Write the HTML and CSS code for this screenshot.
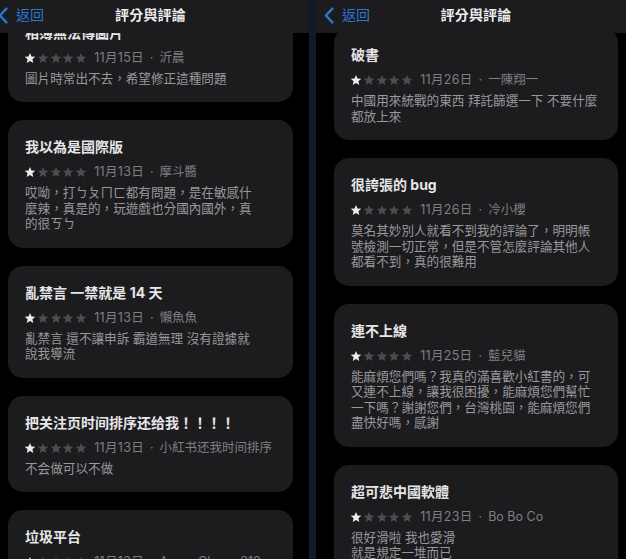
FILE: index.html
```html
<!DOCTYPE html>
<html lang="zh-Hant">
<head>
<meta charset="utf-8">
<title>評分與評論</title>
<link rel="stylesheet" href="styles.css">
</head>
<body>
<svg class="defs" width="0" height="0" aria-hidden="true">
  <symbol id="star" viewBox="0 0 24 24"><path d="M12 1.8l3 7.1 7.6.6-5.8 5 1.8 7.5L12 18l-6.6 4 1.8-7.5-5.8-5 7.6-.6z"/></symbol>
  <symbol id="chev" viewBox="0 0 10 17"><path d="M8.4 1.6 1.9 8.5l6.5 6.9" fill="none" stroke="currentColor" stroke-width="2.4" stroke-linecap="round" stroke-linejoin="round"/></symbol>
</svg>
<div class="screens">
  <section class="panel panel-left">
    <header class="nav">
      <div class="back"><svg class="chev"><use href="#chev"/></svg><span>返回</span></div>
      <div class="nav-title">評分與評論</div>
      <div></div>
    </header>
    <div class="list">
      <article class="card first-left">
        <h3 class="title">相簿無法傳圖片</h3>
        <div class="meta"><span class="stars"><svg class="star on"><use href="#star"/></svg><svg class="star"><use href="#star"/></svg><svg class="star"><use href="#star"/></svg><svg class="star"><use href="#star"/></svg><svg class="star"><use href="#star"/></svg></span><span class="date">11月15日</span><span class="dot">·</span><span>沂晨</span></div>
        <p class="body">圖片時常出不去，希望修正這種問題</p>
      </article>
      <article class="card">
        <h3 class="title">我以為是國際版</h3>
        <div class="meta"><span class="stars"><svg class="star on"><use href="#star"/></svg><svg class="star"><use href="#star"/></svg><svg class="star"><use href="#star"/></svg><svg class="star"><use href="#star"/></svg><svg class="star"><use href="#star"/></svg></span><span class="date">11月13日</span><span class="dot">·</span><span>摩斗醬</span></div>
        <p class="body">哎呦，打ㄅㄆㄇㄈ都有問題，是在敏感什<br>麼辣，真是的，玩遊戲也分國內國外，真<br>的很ㄎㄅ</p>
      </article>
      <article class="card">
        <h3 class="title">亂禁言 一禁就是 14 天</h3>
        <div class="meta"><span class="stars"><svg class="star on"><use href="#star"/></svg><svg class="star"><use href="#star"/></svg><svg class="star"><use href="#star"/></svg><svg class="star"><use href="#star"/></svg><svg class="star"><use href="#star"/></svg></span><span class="date">11月13日</span><span class="dot">·</span><span>懶魚魚</span></div>
        <p class="body">亂禁言 還不讓申訴 霸道無理 沒有證據就<br>說我導流</p>
      </article>
      <article class="card">
        <h3 class="title">把关注页时间排序还给我！！！！</h3>
        <div class="meta"><span class="stars"><svg class="star on"><use href="#star"/></svg><svg class="star"><use href="#star"/></svg><svg class="star"><use href="#star"/></svg><svg class="star"><use href="#star"/></svg><svg class="star"><use href="#star"/></svg></span><span class="date">11月13日</span><span class="dot">·</span><span>小紅书还我时间排序</span></div>
        <p class="body">不会做可以不做</p>
      </article>
      <article class="card">
        <h3 class="title">垃圾平台</h3>
        <div class="meta"><span class="stars"><svg class="star on"><use href="#star"/></svg><svg class="star"><use href="#star"/></svg><svg class="star"><use href="#star"/></svg><svg class="star"><use href="#star"/></svg><svg class="star"><use href="#star"/></svg></span><span class="date">11月13日</span><span class="dot">·</span><span>Aaron Chang 310</span></div>
      </article>
    </div>
  </section>
  <div class="divider"></div>
  <section class="panel panel-right">
    <header class="nav">
      <div class="back"><svg class="chev"><use href="#chev"/></svg><span>返回</span></div>
      <div class="nav-title">評分與評論</div>
      <div></div>
    </header>
    <div class="list">
      <article class="card first-right">
        <h3 class="title">破書</h3>
        <div class="meta"><span class="stars"><svg class="star on"><use href="#star"/></svg><svg class="star"><use href="#star"/></svg><svg class="star"><use href="#star"/></svg><svg class="star"><use href="#star"/></svg><svg class="star"><use href="#star"/></svg></span><span class="date">11月26日</span><span class="dot">·</span><span>一陳翔一</span></div>
        <p class="body">中國用來統戰的東西 拜託篩選一下 不要什麼<br>都放上來</p>
      </article>
      <article class="card">
        <h3 class="title">很誇張的 bug</h3>
        <div class="meta"><span class="stars"><svg class="star on"><use href="#star"/></svg><svg class="star"><use href="#star"/></svg><svg class="star"><use href="#star"/></svg><svg class="star"><use href="#star"/></svg><svg class="star"><use href="#star"/></svg></span><span class="date">11月26日</span><span class="dot">·</span><span>冷小櫻</span></div>
        <p class="body">莫名其妙別人就看不到我的評論了，明明帳<br>號檢測一切正常，但是不管怎麼評論其他人<br>都看不到，真的很難用</p>
      </article>
      <article class="card">
        <h3 class="title">連不上線</h3>
        <div class="meta"><span class="stars"><svg class="star on"><use href="#star"/></svg><svg class="star"><use href="#star"/></svg><svg class="star"><use href="#star"/></svg><svg class="star"><use href="#star"/></svg><svg class="star"><use href="#star"/></svg></span><span class="date">11月25日</span><span class="dot">·</span><span>藍兒貓</span></div>
        <p class="body">能麻煩您們嗎？我真的滿喜歡小紅書的，可<br>又連不上線，讓我很困擾，能麻煩您們幫忙<br>一下嗎？謝謝您們，台灣桃園，能麻煩您們<br>盡快好嗎，感謝</p>
      </article>
      <article class="card">
        <h3 class="title">超可悲中國軟體</h3>
        <div class="meta"><span class="stars"><svg class="star on"><use href="#star"/></svg><svg class="star"><use href="#star"/></svg><svg class="star"><use href="#star"/></svg><svg class="star"><use href="#star"/></svg><svg class="star"><use href="#star"/></svg></span><span class="date">11月23日</span><span class="dot">·</span><span>Bo Bo Co</span></div>
        <p class="body">很好滑啦 我也愛滑<br>就是規定一堆而已</p>
      </article>
    </div>
  </section>
</div>
</body>
</html>
```
FILE: styles.css
```css
* { box-sizing: border-box; }
html, body {
  margin: 0;
  padding: 0;
  width: 626px;
  height: 559px;
  overflow: hidden;
  background: #000;
  font-family: Inter, "Noto Sans CJK TC", "Noto Sans", sans-serif;
}
.defs { position: absolute; width: 0; height: 0; }

.screens {
  display: flex;
  height: 559px;
}
.panel {
  display: flex;
  flex-direction: column;
  height: 559px;
  overflow: hidden;
  background: #000;
}
.panel-left { width: 309px; }
.panel-right { width: 310px; }
.divider { width: 7px; background: #101b2a; }

.nav {
  height: 33px;
  flex: none;
  display: grid;
  grid-template-columns: 1fr auto 1fr;
  align-items: center;
  background: #1c1c1e;
  padding-bottom: 3px;
  position: relative;
  z-index: 1;
}
.panel-left .nav, .panel-left .list { padding-left: 8px; padding-right: 16px; }
.panel-right .nav, .panel-right .list { padding-left: 18px; padding-right: 8px; }

.back {
  display: flex;
  align-items: center;
  gap: 8px;
  margin-left: -10px;
  color: #2a78d2;
  font-size: 14px;
  line-height: 18px;
}
.chev { width: 10px; height: 17px; color: #2a78d2; }
.nav-title {
  color: #ededef;
  font-size: 14px;
  font-weight: 700;
  line-height: 18px;
  letter-spacing: 0.2px;
}

.list {
  flex: 1;
  overflow: hidden;
  display: flex;
  flex-direction: column;
  gap: 18px;
}
.card {
  flex: none;
  background: #1c1c1e;
  border-radius: 15px;
  padding: 16px 17px 16px 17px;
}
.first-left { margin-top: -27.5px; }
.first-right { margin-top: -5px; }

.title {
  margin: 0;
  color: #e6e6e8;
  font-size: 14px;
  font-weight: 700;
  line-height: 22px;
  white-space: nowrap;
}
.meta {
  margin-top: 5px;
  height: 18px;
  display: flex;
  align-items: center;
  color: #7e7e83;
  font-size: 12.5px;
  line-height: 18px;
  white-space: nowrap;
}
.date { letter-spacing: 0.3px; }
.dot { margin: 0 6px; }
.stars {
  display: flex;
  gap: 0.8px;
  margin-right: 7px;
  margin-left: -1px;
}
.star {
  width: 12px;
  height: 12px;
  fill: #4d4d51;
}
.star.on { fill: #ececee; }
.body {
  margin: 4px 0 0;
  color: #98989d;
  font-size: 12.6px;
  line-height: 15.5px;
  white-space: nowrap;
}
```
